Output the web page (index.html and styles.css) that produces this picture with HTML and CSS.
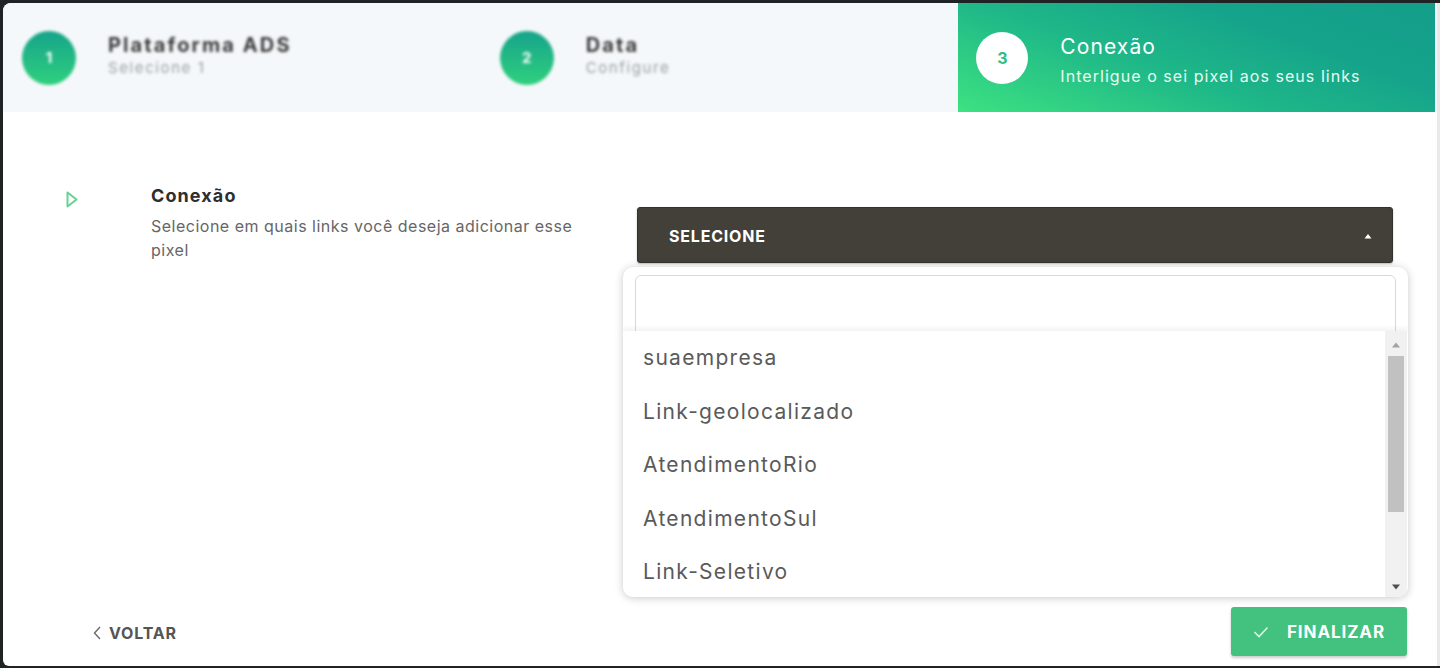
FILE: index.html
```html
<!DOCTYPE html>
<html lang="pt">
<head>
<meta charset="utf-8">
<title>Conexão</title>
<link rel="stylesheet" href="styles.css">
</head>
<body>
<div class="window">
  <header class="steps">
    <div class="step step-done">
      <div class="step-circle">1</div>
      <div class="step-text">
        <div class="step-title">Plataforma ADS</div>
        <div class="step-sub">Selecione 1</div>
      </div>
    </div>
    <div class="step step-done">
      <div class="step-circle">2</div>
      <div class="step-text">
        <div class="step-title">Data</div>
        <div class="step-sub">Configure</div>
      </div>
    </div>
    <div class="step step-active">
      <div class="step-circle">3</div>
      <div class="step-text">
        <div class="step-title">Conexão</div>
        <div class="step-sub">Interligue o sei pixel aos seus links</div>
      </div>
    </div>
  </header>

  <main class="content">
    <div class="field-icon">
      <svg width="14" height="19" viewBox="0 0 14 19"><path d="M2.5 2.5 L11.5 9.5 L2.5 16.5 Z" fill="none" stroke="#66d394" stroke-width="2" stroke-linejoin="round"/></svg>
    </div>
    <div class="field-info">
      <div class="field-title">Conexão</div>
      <div class="field-desc">Selecione em quais links você deseja adicionar esse pixel</div>
    </div>
    <div class="field-control">
      <div class="select-box">
        <span>SELECIONE</span>
        <svg class="select-caret" width="8" height="6" viewBox="0 0 8 6"><path d="M0.5 5.5 L4 1 L7.5 5.5 Z" fill="#fff"/></svg>
      </div>
      <div class="dropdown">
        <div class="dd-search"></div>
        <div class="dd-list">
          <ul class="dd-items">
            <li>suaempresa</li>
            <li>Link-geolocalizado</li>
            <li>AtendimentoRio</li>
            <li>AtendimentoSul</li>
            <li>Link-Seletivo</li>
          </ul>
          <div class="dd-scroll">
            <svg class="dd-arrow" width="8" height="6" viewBox="0 0 8 6"><path d="M0 5.5 L4 0.5 L8 5.5 Z" fill="#a3a3a3"/></svg>
            <div class="dd-track"><div class="dd-thumb"></div></div>
            <svg class="dd-arrow" width="8" height="6" viewBox="0 0 8 6"><path d="M0 0.5 L4 5.5 L8 0.5 Z" fill="#505050"/></svg>
          </div>
        </div>
      </div>
    </div>
  </main>

  <footer class="actions">
    <a class="btn-back">
      <svg width="10" height="16" viewBox="0 0 10 16"><path d="M8 2 L2.5 8 L8 14" fill="none" stroke="#6a6a6a" stroke-width="1.4"/></svg>
      <span>VOLTAR</span>
    </a>
    <button class="btn-finish">
      <svg width="16" height="12" viewBox="0 0 16 12"><path d="M1.5 6 L6 10.5 L14.5 1.5" fill="none" stroke="#d8f5e4" stroke-width="1.6"/></svg>
      <span>FINALIZAR</span>
    </button>
  </footer>
</div>
</body>
</html>
```

FILE: styles.css
```css
* { box-sizing: border-box; }
html, body { margin: 0; padding: 0; }
body {
  background: #202324;
  width: 1440px;
  height: 668px;
  overflow: hidden;
  font-family: "Inter", "Open Sans", sans-serif;
  padding: 3px 0 2px 3px;
}
.window {
  width: 1437px;
  height: 663px;
  background: #ffffff;
  border-radius: 8px 0 0 6px;
  border-right: 3px solid #e9e9e9;
  overflow: hidden;
  display: flex;
  flex-direction: column;
  position: relative;
}

/* Steps header */
.steps {
  display: flex;
  height: 109px;
  background: #f5f8fa;
  flex: 0 0 auto;
}
.step {
  flex: 1 1 0;
  display: flex;
  align-items: center;
  padding-left: 19px;
  gap: 32px;
}
.step-done > * { filter: blur(1.5px); }
.step-done .step-text { margin-top: -4px; }
.step-circle {
  width: 54px;
  height: 54px;
  border-radius: 50%;
  flex: 0 0 auto;
  display: flex;
  align-items: center;
  justify-content: center;
  background: linear-gradient(180deg, #16a38a 0%, #2fd07e 100%);
  color: #fff;
  font-weight: 700;
  font-size: 15px;
}
.step-title {
  font-size: 20px;
  font-weight: 700;
  color: #3a3a3a;
  line-height: 24px;
  letter-spacing: 2.1px;
}
.step-sub {
  font-size: 15px;
  color: #9aa0a4;
  line-height: 20px;
  margin-top: 1px;
  letter-spacing: 1.6px;
}
.step-active {
  background: linear-gradient(20deg, #3de281 0%, #1fb888 40%, #15a38b 70%, #139e8a 100%);
  margin-right: 2px;
  padding-left: 18px;
  gap: 32px;
}
.step-active .step-text { margin-top: 4px; }
.step-active .step-circle {
  width: 52px;
  height: 52px;
  background: #ffffff;
  color: #2fbd86;
  font-size: 16px;
}
.step-active .step-title {
  font-size: 21px;
  font-weight: 400;
  color: #ffffff;
  line-height: 26px;
  letter-spacing: 1.1px;
}
.step-active .step-sub {
  font-size: 16px;
  color: #e8fbf1;
  line-height: 20px;
  margin-top: 6px;
  letter-spacing: 1.05px;
}

/* Content */
.content {
  flex: 1 1 auto;
  display: grid;
  grid-template-columns: 148px 462px 780px;
  column-gap: 0;
  padding-top: 74px;
  align-items: start;
}
.field-icon {
  padding-left: 62px;
  padding-top: 4px;
}
.field-icon svg { display: block; }
.field-info {
  padding-right: 20px;
}
.field-title {
  font-size: 18px;
  font-weight: 700;
  color: #2e2e2e;
  line-height: 20px;
  letter-spacing: 1.1px;
}
.field-desc {
  font-size: 16px;
  color: #666666;
  line-height: 24px;
  margin-top: 8px;
  letter-spacing: 0.5px;
}
.field-control {
  margin-left: 24px;
  width: 756px;
  margin-top: 21px;
  position: relative;
}
.select-box {
  height: 56px;
  background: #433f39;
  border: 1px solid #35322d;
  border-radius: 3px;
  display: flex;
  align-items: center;
  justify-content: space-between;
  padding: 2px 20px 0 31px;
  color: #ffffff;
  font-size: 16px;
  font-weight: 700;
  letter-spacing: 0.8px;
  box-shadow: 0 1px 2px rgba(0,0,0,0.25);
}
.select-caret { display: block; }

.dropdown {
  position: absolute;
  left: -14px;
  top: 60px;
  width: 785px;
  height: 330px;
  background: #ffffff;
  border-radius: 10px;
  box-shadow: 0 1px 8px rgba(0,0,0,0.22);
  overflow: hidden;
  padding-top: 8px;
}
.dd-search {
  margin: 0 12px 0 12px;
  height: 62px;
  border: 1px solid #d8d8d8;
  border-radius: 6px;
}
.dd-list {
  position: absolute;
  left: 0;
  top: 64px;
  right: 0;
  bottom: 0;
  background: #ffffff;
  display: flex;
  box-shadow: 0 -3px 4px rgba(0,0,0,0.05);
  border-radius: 0 0 10px 10px;
}
.dd-items {
  list-style: none;
  margin: 0;
  padding: 0;
  flex: 1 1 auto;
}
.dd-items li {
  height: 53.5px;
  line-height: 53.5px;
  padding-left: 20px;
  font-size: 21px;
  letter-spacing: 1.3px;
  color: #5a5a5a;
}
.dd-scroll {
  width: 22px;
  background: #f1f1f1;
  display: flex;
  flex-direction: column;
  align-items: center;
  padding: 11px 0 7px;
  margin-right: 1px;
}
.dd-arrow { display: block; flex: 0 0 auto; }
.dd-track {
  flex: 1 1 auto;
  width: 100%;
  padding: 8px 3px 0;
}
.dd-thumb {
  height: 156px;
  background: #c1c1c1;
}

/* Footer */
.actions {
  flex: 0 0 auto;
  display: flex;
  justify-content: space-between;
  align-items: center;
  padding: 0 30px 10px 89px;
  height: 59px;
}
.btn-back {
  display: flex;
  align-items: center;
  gap: 7px;
  font-size: 16px;
  font-weight: 700;
  color: #555555;
  letter-spacing: 0.8px;
  margin-top: 2px;
}
.btn-back svg { display: block; }
.btn-finish {
  width: 176px;
  height: 49px;
  border: none;
  border-radius: 3px;
  background: #43c17e;
  color: #ffffff;
  font-family: inherit;
  font-size: 17px;
  font-weight: 700;
  letter-spacing: 0.9px;
  display: flex;
  align-items: center;
  justify-content: center;
  gap: 18px;
  box-shadow: 0 2px 3px rgba(0,0,0,0.2);
  padding: 0;
}
.btn-finish svg { display: block; }
```
